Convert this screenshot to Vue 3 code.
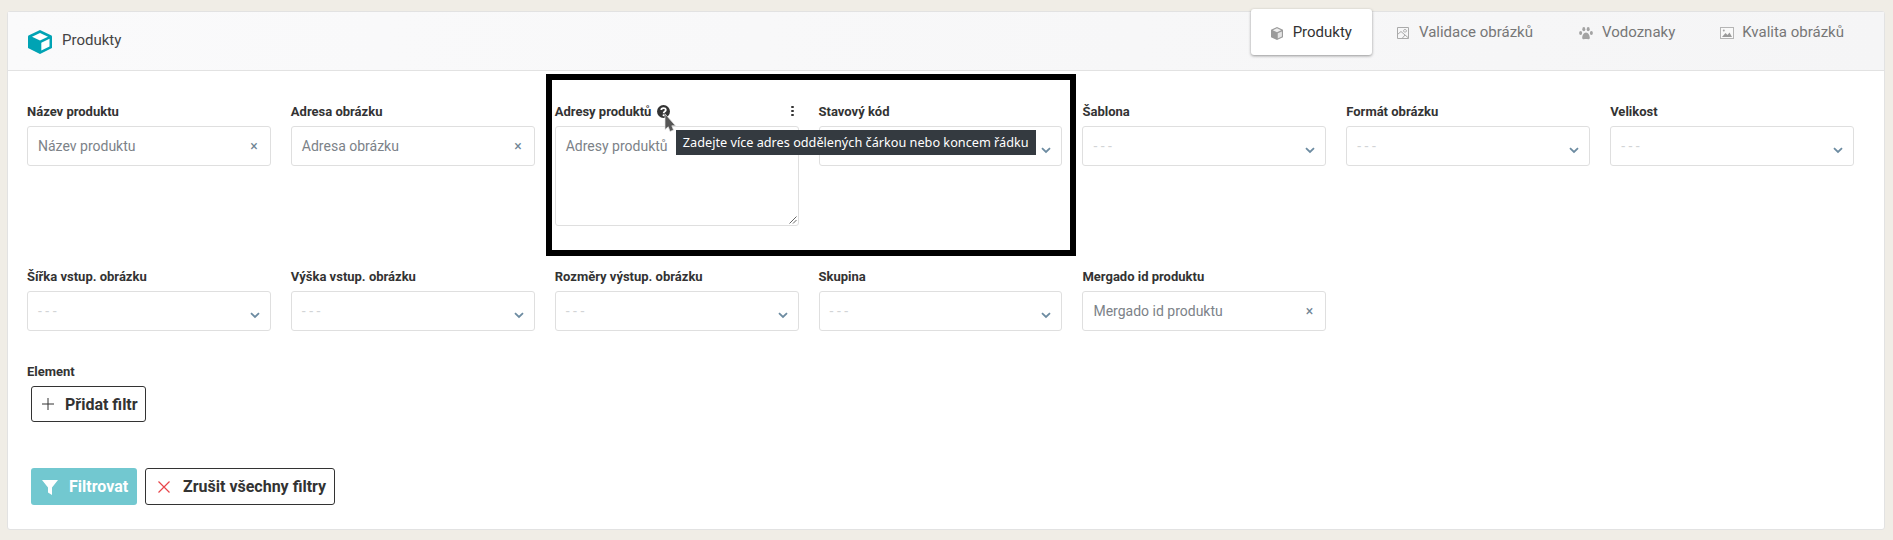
<script setup>
const firstRow = [
  { label: 'Název produktu', type: 'text' },
  { label: 'Adresa obrázku', type: 'text' },
  { label: 'Adresy produktů', type: 'area' },
  { label: 'Stavový kód', type: 'select' },
  { label: 'Šablona', type: 'select' },
  { label: 'Formát obrázku', type: 'select' },
  { label: 'Velikost', type: 'select' },
]
const secondRow = [
  { label: 'Šířka vstup. obrázku', type: 'select' },
  { label: 'Výška vstup. obrázku', type: 'select' },
  { label: 'Rozměry výstup. obrázku', type: 'select' },
  { label: 'Skupina', type: 'select' },
  { label: 'Mergado id produktu', type: 'text' },
]
const fields = [...firstRow, ...secondRow]
</script>

<template>
  <div class="page">
    <section class="card">
      <header class="head">
        <div class="title">
          <svg class="cube" viewBox="0 0 24 24" width="24" height="24">
            <path d="M12 0 L23.500 5.500 Q24 5.800 24 6.500 V18 L12 24 L0 18 V6.500 Q0 5.800 .5 5.500 Z" fill="#00a3b4" />
            <path d="M12 3 L20 6.800 L12 10.600 L4 6.800 Z" fill="#fff" />
            <path d="M13.300 12.700 L21.500 8.800 V16.500 L13.300 20.500 Z" fill="#fff" />
          </svg>
          <span>Produkty</span>
        </div>
        <nav class="tabs">
          <a class="tab active">
            <svg viewBox="0 0 13 14" width="12" height="13"><path d="M6.500 0 L13 3 V11 L6.500 14 L0 11 V3 Z" fill="#9b9b9b" /><path d="M6.500 1.400 L11 3.500 L6.500 5.600 L2 3.500 Z" fill="#eee" /><path d="M7.300 6.800 L11.800 4.700 V10.200 L7.300 12.400 Z" fill="#e4e4e4" /></svg>
            Produkty
          </a>
          <a class="tab validace">
            <svg viewBox="0 0 12 12" width="12" height="12"><path d="M.5 .5 H11.500 V11.500 H.5 Z M.5 7.500 L4 4.500 L11.500 11 M5 11.500 L8 8 M8 2.400 a1.400 1.400 0 1 0 .01 0" fill="none" stroke="#aaa" stroke-width="1" /></svg>
            Validace obrázků
          </a>
          <a class="tab vodoznaky">
            <svg viewBox="0 0 14 13" width="14" height="13"><g fill="#a3a3a3"><ellipse cx="1.600" cy="6" rx="1.500" ry="1.900" /><ellipse cx="4.800" cy="2.200" rx="1.500" ry="2.100" /><ellipse cx="9.200" cy="2.200" rx="1.500" ry="2.100" /><ellipse cx="12.400" cy="6" rx="1.500" ry="1.900" /><path d="M7 5.500 C4.800 5.500 3.200 8.500 3.200 10.800 C3.200 12.900 5.600 12.100 7 12.100 C8.400 12.100 10.800 12.900 10.800 10.800 C10.800 8.500 9.200 5.500 7 5.500 Z" /></g></svg>
            Vodoznaky
          </a>
          <a class="tab kvalita">
            <svg viewBox="0 0 14 12" width="14" height="12"><rect x=".5" y=".5" width="13" height="11" fill="#f9f9f9" stroke="#b5b5b5" stroke-width="1" /><path d="M2 10 L5.500 6 L7.500 8 L9.500 5.500 L12 10 Z" fill="#9a9a9a" /><circle cx="3.800" cy="3.500" r="1" fill="#a5a5a5" /></svg>
            Kvalita obrázků
          </a>
        </nav>
      </header>

      <div class="body">
        <div class="grid">
          <div v-for="f in fields" :key="f.label" class="field" :class="{ anchored: f.type === 'area' }">
            <div class="label">
              <span>{{ f.label }}</span>
              <template v-if="f.type === 'area'">
                <svg class="help" viewBox="0 0 14 14" width="13" height="13">
                  <circle cx="7" cy="7" r="7" fill="#333" />
                  <path d="M4.600 5.400 C4.600 2.600 9.500 2.600 9.500 5.300 C9.500 7 7.100 6.900 7.100 8.800" fill="none" stroke="#fff" stroke-width="1.900" />
                  <circle cx="7.100" cy="11" r="1.100" fill="#fff" />
                </svg>
                <span class="dots"><i></i><i></i><i></i></span>
              </template>
            </div>

            <div v-if="f.type === 'text'" class="input">
              <span class="ph">{{ f.label }}</span>
              <span class="clear">×</span>
            </div>
            <div v-else-if="f.type === 'select'" class="input">
              <span class="dash">- - -</span>
              <svg class="chev" viewBox="0 0 10 7" width="10" height="7"><path d="M1 1.200 L5 5 L9 1.200" fill="none" stroke="#6c8ba1" stroke-width="1.800" /></svg>
            </div>
            <div v-else class="area">
              <span class="ph">{{ f.label }}</span>
              <svg class="grip" viewBox="0 0 8 8" width="8" height="8"><path d="M7.500 .5 L.5 7.500 M7.500 4 L4 7.500" stroke="#666" stroke-width="1" /></svg>
            </div>

            <template v-if="f.type === 'area'">
              <div class="highlight"></div>
              <div class="tooltip">Zadejte více adres oddělených čárkou nebo koncem řádku</div>
              <svg class="pointer" viewBox="0 0 12 20" width="12" height="20">
                <path d="M1 .8 V16.500 L4.300 13.800 L6 18.500 L9.500 17 L7.800 12.800 H11.500 Z" fill="#555" stroke="#e4e4e4" stroke-width=".7" />
              </svg>
            </template>
          </div>
        </div>

        <div class="element">
          <div class="label">Element</div>
          <button class="btn outline add">
            <svg viewBox="0 0 12 12" width="12" height="12"><path d="M6 0 V12 M0 6 H12" stroke="#333" stroke-width="1" /></svg>
            Přidat filtr
          </button>
        </div>

        <div class="actions">
          <button class="btn primary">
            <svg viewBox="0 0 16 16" width="16" height="16"><path d="M0 1 H16 L10 8.500 V16 L6 13.500 V8.500 Z" fill="#fff" /></svg>
            Filtrovat
          </button>
          <button class="btn outline reset">
            <svg viewBox="0 0 12 12" width="12" height="12"><path d="M.5 .5 L11.500 11.500 M11.500 .5 L.5 11.500" stroke="#e8454a" stroke-width="1.200" /></svg>
            Zrušit všechny filtry
          </button>
        </div>
      </div>
    </section>
  </div>
</template>

<style scoped>
.page {
  height: 540px;
  padding: 11px 8px 10px 7px;
  box-sizing: border-box;
  background: #f0ede6;
  font-family: Roboto, sans-serif;
  color: #333;
}
.card {
  height: 100%;
  box-sizing: border-box;
  background: #fff;
  border: 1px solid #e2e2e2;
  border-radius: 3px;
}
.head {
  height: 59px;
  box-sizing: border-box;
  display: flex;
  justify-content: space-between;
  align-items: flex-start;
  background: linear-gradient(90deg, #fafafb, #f5f5f6);
  border-bottom: 1px solid #e2e2e2;
  padding-left: 20px;
}
.title {
  display: flex;
  align-items: center;
  gap: 10px;
  height: 56px;
  font-size: 15px;
  color: #444;
}
.cube {
  margin-top: 4px;
}
.tabs {
  display: flex;
  margin-top: -3px;
  margin-right: 17px;
}
.tab {
  display: flex;
  align-items: center;
  gap: 9px;
  height: 46px;
  padding: 0 23px;
  font-size: 15px;
  color: #777;
}
.tab svg {
  margin-top: 2px;
}
.tab.validace {
  gap: 10px;
  padding-left: 25px;
}
.tab.vodoznaky {
  padding-right: 22px;
}
.tab.kvalita {
  gap: 8px;
}
.tab.active {
  background: #fff;
  color: #333;
  border-radius: 3px;
  box-shadow: 0 1px 3px rgba(0, 0, 0, 0.4);
  padding: 0 20px;
  gap: 10px;
}
.body {
  padding: 32px 30px 0 19px;
}
.grid {
  display: grid;
  grid-template-columns: repeat(7, 1fr);
  gap: 42px 20px;
  align-items: start;
}
.field {
  position: relative;
}
.field.anchored {
  z-index: 2;
}
.label {
  display: flex;
  align-items: center;
  height: 16px;
  margin-bottom: 7px;
  font-size: 13px;
  font-weight: 700;
  color: #333;
}
.help {
  margin-left: 6px;
}
.dots {
  margin-left: auto;
  margin-right: 5px;
  display: flex;
  flex-direction: column;
  gap: 1.500px;
}
.dots i {
  display: block;
  width: 2.500px;
  height: 2.500px;
  border-radius: 50%;
  background: #333;
}
.input {
  position: relative;
  height: 40px;
  box-sizing: border-box;
  border: 1px solid #dfdfdf;
  border-radius: 3px;
  display: flex;
  align-items: center;
  padding: 0 10px;
}
.area {
  position: relative;
  height: 100px;
  box-sizing: border-box;
  border: 1px solid #dfdfdf;
  border-radius: 3px;
  padding: 9px 10px;
}
.ph {
  font-size: 14px;
  color: #7c8288;
  line-height: 18px;
}
.dash {
  font-size: 14px;
  color: #d2d4d6;
}
.clear {
  position: absolute;
  right: 12px;
  top: 10px;
  font-size: 14px;
  line-height: 18px;
  color: #6f8494;
}
.chev {
  position: absolute;
  right: 10px;
  top: 20px;
}
.grip {
  position: absolute;
  right: 1px;
  bottom: 1px;
}
.highlight {
  position: absolute;
  left: -9px;
  top: -29px;
  width: 530px;
  height: 182px;
  box-sizing: border-box;
  border: 6px solid #000;
  pointer-events: none;
}
.tooltip {
  position: absolute;
  left: 121px;
  top: 27px;
  width: 360px;
  height: 25px;
  background: #343a40;
  color: #fff;
  font-family: "Noto Sans", sans-serif;
  font-size: 12.700px;
  line-height: 25px;
  text-align: center;
  white-space: nowrap;
}
.pointer {
  position: absolute;
  left: 109px;
  top: 10px;
}
.element {
  margin-top: 32px;
}
.btn {
  display: inline-flex;
  align-items: center;
  box-sizing: border-box;
  height: 37px;
  border-radius: 3px;
  font-family: Roboto, sans-serif;
  font-size: 16px;
  font-weight: 700;
  padding: 0;
}
.outline {
  background: #fff;
  border: 1px solid #333;
  color: #333;
}
.add {
  display: flex;
  width: 115px;
  height: 36px;
  margin-top: 2px;
  margin-left: 4px;
  padding-left: 10px;
  gap: 11px;
}
.actions {
  display: flex;
  gap: 8px;
  margin-top: 46px;
  margin-left: 4px;
}
.primary {
  width: 106px;
  background: #72c8d0;
  border: 0;
  color: #fff;
  padding-left: 11px;
  gap: 11px;
}
.reset {
  width: 190px;
  padding-left: 12px;
  gap: 13px;
}
</style>

<style>
body {
  margin: 0;
  background: #f0ede6;
}
</style>
